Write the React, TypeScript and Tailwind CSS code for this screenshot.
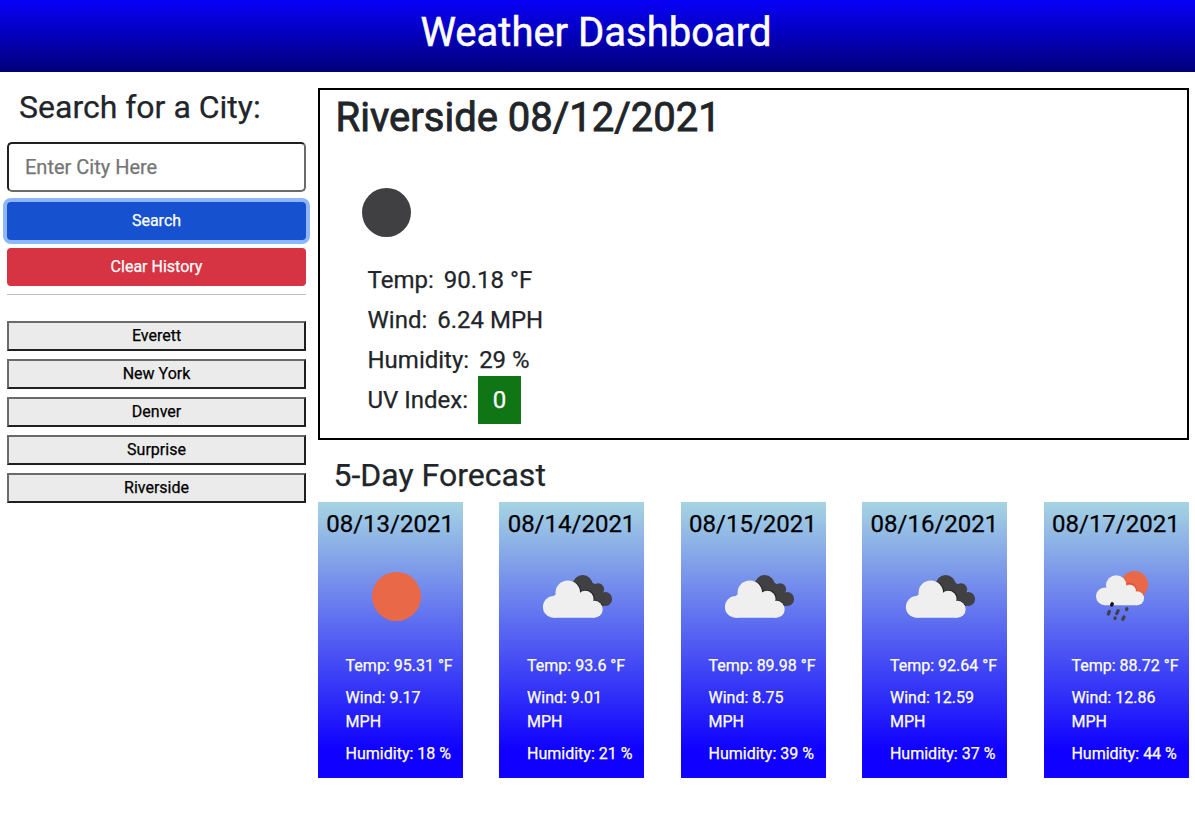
type IconKind = 'sun' | 'clouds' | 'rain';

interface Day {
  date: string;
  icon: IconKind;
  temp: string;
  wind: string;
  humidity: string;
}

const cities = ['Everett', 'New York', 'Denver', 'Surprise', 'Riverside'];

const forecast: Day[] = [
  { date: '08/13/2021', icon: 'sun', temp: '95.31', wind: '9.17', humidity: '18' },
  { date: '08/14/2021', icon: 'clouds', temp: '93.6', wind: '9.01', humidity: '21' },
  { date: '08/15/2021', icon: 'clouds', temp: '89.98', wind: '8.75', humidity: '39' },
  { date: '08/16/2021', icon: 'clouds', temp: '92.64', wind: '12.59', humidity: '37' },
  { date: '08/17/2021', icon: 'rain', temp: '88.72', wind: '12.86', humidity: '44' },
];

function Disc({ color }: { color: string }) {
  return (
    <svg className="block size-[100px]" viewBox="0 0 100 100">
      <circle cx="50.5" cy="50.5" r="24.5" fill={color} />
    </svg>
  );
}

function CloudShape() {
  return (
    <>
      <circle cx="26.2" cy="60.9" r="10.8" />
      <circle cx="40.3" cy="46.7" r="12.3" />
      <circle cx="57.8" cy="53" r="8.3" />
      <circle cx="66.7" cy="63.2" r="8.5" />
      <path d="M26 50.1L40 40L57 50L67 63V71.7H26Z" />
    </>
  );
}

function Clouds() {
  return (
    <svg className="block size-[100px]" viewBox="-0.5 0 100 100">
      <g fill="#414143">
        <circle cx="55.2" cy="39" r="10" />
        <circle cx="70.6" cy="43.2" r="6" />
        <circle cx="77.6" cy="53" r="7" />
        <path d="M55 33L64 36L70 40L78 53L76 60L68 59L50 45Z" />
      </g>
      <g fill="#262629" transform="translate(1.1 -.6)">
        <circle cx="57.8" cy="53" r="8.3" />
        <path d="M45 36a12.3 12.3 0 0 1 8 12L48 52Z" />
        <path d="M66 55a8.3 8.3 0 0 1 8 5l-5 2Z" />
      </g>
      <g fill="#efefef">
        <CloudShape />
      </g>
    </svg>
  );
}

function Rain() {
  return (
    <svg className="block size-[100px]" viewBox="0 0 100 100">
      <circle cx="62.5" cy="38.6" r="13.6" fill="#e96848" />
      <g fill="none" stroke="#e84525" strokeWidth="1">
        <path d="M51 36.5q3 3 3 7.5" />
        <path d="M54 38.2a6.8 6.8 0 0 1 10.2 6.8" />
        <path d="M64 45.5q6 0 8.3 4.5" />
      </g>
      <g fill="#efefef">
        <circle cx="32.9" cy="50.3" r="8.9" />
        <circle cx="44.2" cy="39.5" r="10.2" />
        <circle cx="57.6" cy="45" r="6.3" />
        <circle cx="65" cy="52.2" r="7" />
        <path d="M33 43L44 34L57 42L65 50V59.2H33Z" />
      </g>
      <g stroke="#404044" strokeWidth="3.2" strokeLinecap="round">
        <path d="M37.4 65.5L36.3 68" />
        <path d="M46.2 64.6L44.7 67.6" />
        <path d="M54.9 62.7L54.5 63.6" />
        <path d="M43.2 71.9L42.9 72.5" />
        <path d="M52 71L50.8 73.3" />
      </g>
      <path d="M40.2 57.8L39.7 59" stroke="#17171a" strokeWidth="3.5" strokeLinecap="round" />
    </svg>
  );
}

function WeatherIcon({ kind }: { kind: IconKind }) {
  if (kind === 'sun') return <Disc color="#e96848" />;
  if (kind === 'clouds') return <Clouds />;
  return <Rain />;
}

function Sidebar() {
  return (
    <aside className="w-[299px] shrink-0">
      <h2 className="mt-4 pl-3 text-[32px] leading-[38px]">Search for a City:</h2>
      <input
        className="mt-4 block h-[50px] w-full rounded-[5px] border-2 border-t-[#202020] border-r-[#6b6b6b] border-b-[#6b6b6b] border-l-[#202020] px-4 text-[20px] outline-none placeholder:text-[#757575]"
        placeholder="Enter City Here"
      />
      <button className="mt-2.5 block h-[38px] w-full rounded-[4px] bg-[#1651d0] text-base text-white shadow-[0_0_0_4px_#8eb6fb]">
        Search
      </button>
      <button className="mt-2 block h-[38px] w-full rounded-[4px] bg-[#d63343] text-base text-white">
        Clear History
      </button>
      <hr className="mt-2 border-0 border-t border-[#c1c1c2]" />
      <div className="mt-[26px] flex flex-col gap-2">
        {cities.map((city) => (
          <button
            key={city}
            className="h-[30px] border-2 border-t-[#6b6b6b] border-r-[#202020] border-b-[#202020] border-l-[#6b6b6b] bg-[#ebebeb] text-base leading-6 text-black"
          >
            {city}
          </button>
        ))}
      </div>
    </aside>
  );
}

function Current() {
  return (
    <section className="h-[352px] border-2 border-black pl-4">
      <h2 className="-ml-[0.5px] pt-1 text-[40px] leading-[48px] font-normal [-webkit-text-stroke:0.85px_currentColor]">
        Riverside 08/12/2021
      </h2>
      <div className="mt-5">
        <Disc color="#404042" />
      </div>
      <div className="flex flex-col gap-1 pl-[31.5px] text-2xl leading-9">
        <p className="flex gap-2.5">
          <span>Temp:</span>
          <span>90.18 °F</span>
        </p>
        <p className="flex gap-2.5">
          <span>Wind:</span>
          <span>6.24 MPH</span>
        </p>
        <p className="flex gap-2.5">
          <span>Humidity:</span>
          <span>29 %</span>
        </p>
        <p className="flex h-9 items-center">
          UV Index:
          <span className="ml-2.5 flex h-12 w-[43px] shrink-0 items-center justify-center bg-[#0f7515] text-white">
            0
          </span>
        </p>
      </div>
    </section>
  );
}

function ForecastCard({ day }: { day: Day }) {
  return (
    <article className="h-[276px] w-[144.95px] bg-linear-to-b/srgb from-[#a6d4e2] to-[#0f00ff] to-90% pt-2 text-white">
      <h3 className="pl-[8.2px] text-2xl leading-[29px] text-black">{day.date}</h3>
      <div className="mt-[7px] pl-7">
        <WeatherIcon kind={day.icon} />
      </div>
      <div className="mt-2 flex flex-col gap-2 pl-[27.6px] text-base leading-6">
        <p className="whitespace-nowrap">Temp: {day.temp} °F</p>
        <p>
          Wind: {day.wind}
          <br />
          MPH
        </p>
        <p className="whitespace-nowrap">Humidity: {day.humidity} %</p>
      </div>
    </article>
  );
}

export default function App() {
  return (
    <div className="min-h-[827px] bg-white font-['Roboto',sans-serif] text-[#212529] antialiased [-webkit-text-stroke:0.25px_currentColor]">
      <header className="h-[72px] bg-linear-to-b/srgb from-[#0800f8] to-[#000079] pt-[9px] pr-[3px] text-center text-[40px] leading-[48px] font-normal text-white [-webkit-text-stroke:0.5px_currentColor]">
        <h1>Weather Dashboard</h1>
      </header>
      <div className="flex gap-3 pr-1.5 pl-[7px]">
        <Sidebar />
        <main className="min-w-0 flex-1 pt-4">
          <Current />
          <h2 className="mt-4 pl-[15.5px] text-[32px] leading-[38px]">5-Day Forecast</h2>
          <div className="mt-2 flex justify-between pr-[0.25px]">
            {forecast.map((day) => (
              <ForecastCard key={day.date} day={day} />
            ))}
          </div>
        </main>
      </div>
    </div>
  );
}
